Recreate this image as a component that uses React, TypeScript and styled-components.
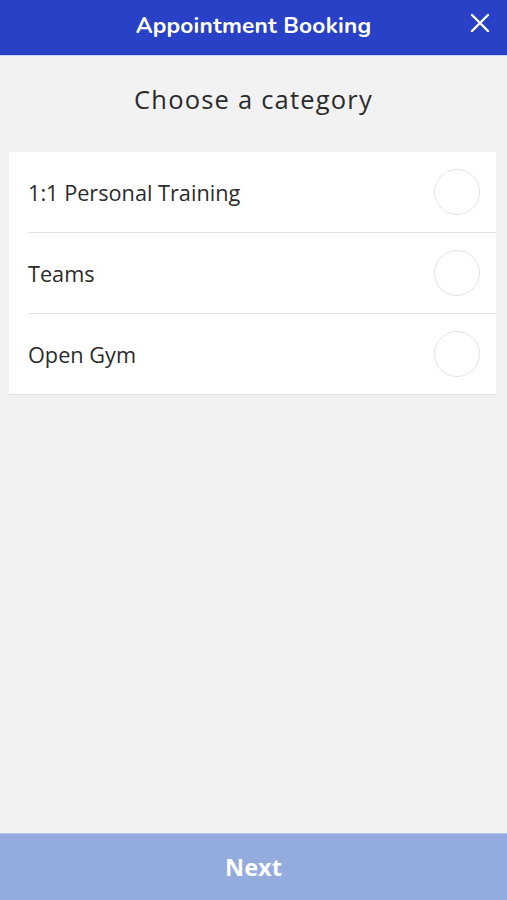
import React, { type FC, useState } from 'react'
import styled, { createGlobalStyle } from 'styled-components'

const categories = ['1:1 Personal Training', 'Teams', 'Open Gym']

const App: FC = () => {
  const [selected, setSelected] = useState<number | null>(null)

  return <>
    <GlobalStyle />
    <Page>
      <Header>
        <HeaderTitle>Appointment Booking</HeaderTitle>
        <CloseButton type="button" aria-label="Close">
          <svg width="20" height="20" viewBox="0 0 20 20">
            <path d="M2 2 L18 18 M18 2 L2 18" stroke="#fff" strokeWidth="2.4" strokeLinecap="round" />
          </svg>
        </CloseButton>
      </Header>
      <Content>
        <Heading>Choose a category</Heading>
        <CategoryList>
          {categories.map((name, index) => (
            <CategoryRow key={name} onClick={() => { setSelected(index) }}>
              <CategoryName>{name}</CategoryName>
              <RadioCircle $checked={selected === index} />
            </CategoryRow>
          ))}
        </CategoryList>
      </Content>
      <NextButton type="button" disabled={selected === null}>Next</NextButton>
    </Page>
  </>
}

const GlobalStyle = createGlobalStyle`
  html, body {
    margin: 0;
    padding: 0;
    background: #f2f2f2;
    font-family: "Open Sans", "Liberation Sans", sans-serif;
  }
`

const Page = styled.div`
  display: flex;
  flex-direction: column;
  height: 900px;
  background: #f2f2f2;
`

const Header = styled.header`
  position: relative;
  display: flex;
  align-items: center;
  justify-content: center;
  height: 56px;
  padding-bottom: 5px;
  box-sizing: border-box;
  background: #2841c6;
  border-bottom: 1px solid #c9d2f0;
`

const HeaderTitle = styled.h1`
  margin: 0;
  color: #fff;
  font-family: "Nunito", "Lato", "Open Sans", sans-serif;
  font-weight: 700;
  font-size: 22.7px;
  letter-spacing: 0.2px;
`

const CloseButton = styled.button`
  position: absolute;
  right: 17px;
  top: 13px;
  padding: 0;
  border: none;
  background: none;
  display: flex;
  cursor: pointer;
`

const Content = styled.main`
  flex: 1;
  display: flex;
  flex-direction: column;
`

const Heading = styled.h2`
  margin: 26px 0 0;
  height: 42px;
  text-align: center;
  font-weight: 400;
  font-size: 25.5px;
  letter-spacing: 1.2px;
  color: #2b2b2b;
`

const CategoryList = styled.ul`
  list-style: none;
  margin: 28px 11px 0 9px;
  padding: 0 0 0 19px;
  background: #fff;
  border-bottom: 1px solid #e2e2e2;
`

const CategoryRow = styled.li`
  display: flex;
  align-items: center;
  justify-content: space-between;
  height: 80px;
  padding-right: 16px;
  border-bottom: 1px solid #e2e2e2;
  cursor: pointer;

  &:last-child {
    border-bottom: none;
  }
`

const CategoryName = styled.span`
  font-size: 21.7px;
  color: #2b2b2b;
`

const RadioCircle = styled.span<{ $checked: boolean }>`
  box-sizing: border-box;
  width: 46px;
  height: 46px;
  border-radius: 50%;
  border: ${({ $checked }) => $checked ? '12px solid #2841c6' : '1.5px solid #e4e4e4'};
`

const NextButton = styled.button`
  height: 67px;
  border: none;
  border-top: 1px solid #b3c6ea;
  background: #2841c6;
  color: #fff;
  font-family: "Open Sans", "Liberation Sans", sans-serif;
  font-weight: 700;
  font-size: 23.5px;

  &:disabled {
    background: #93abdd;
  }
`

export default App
